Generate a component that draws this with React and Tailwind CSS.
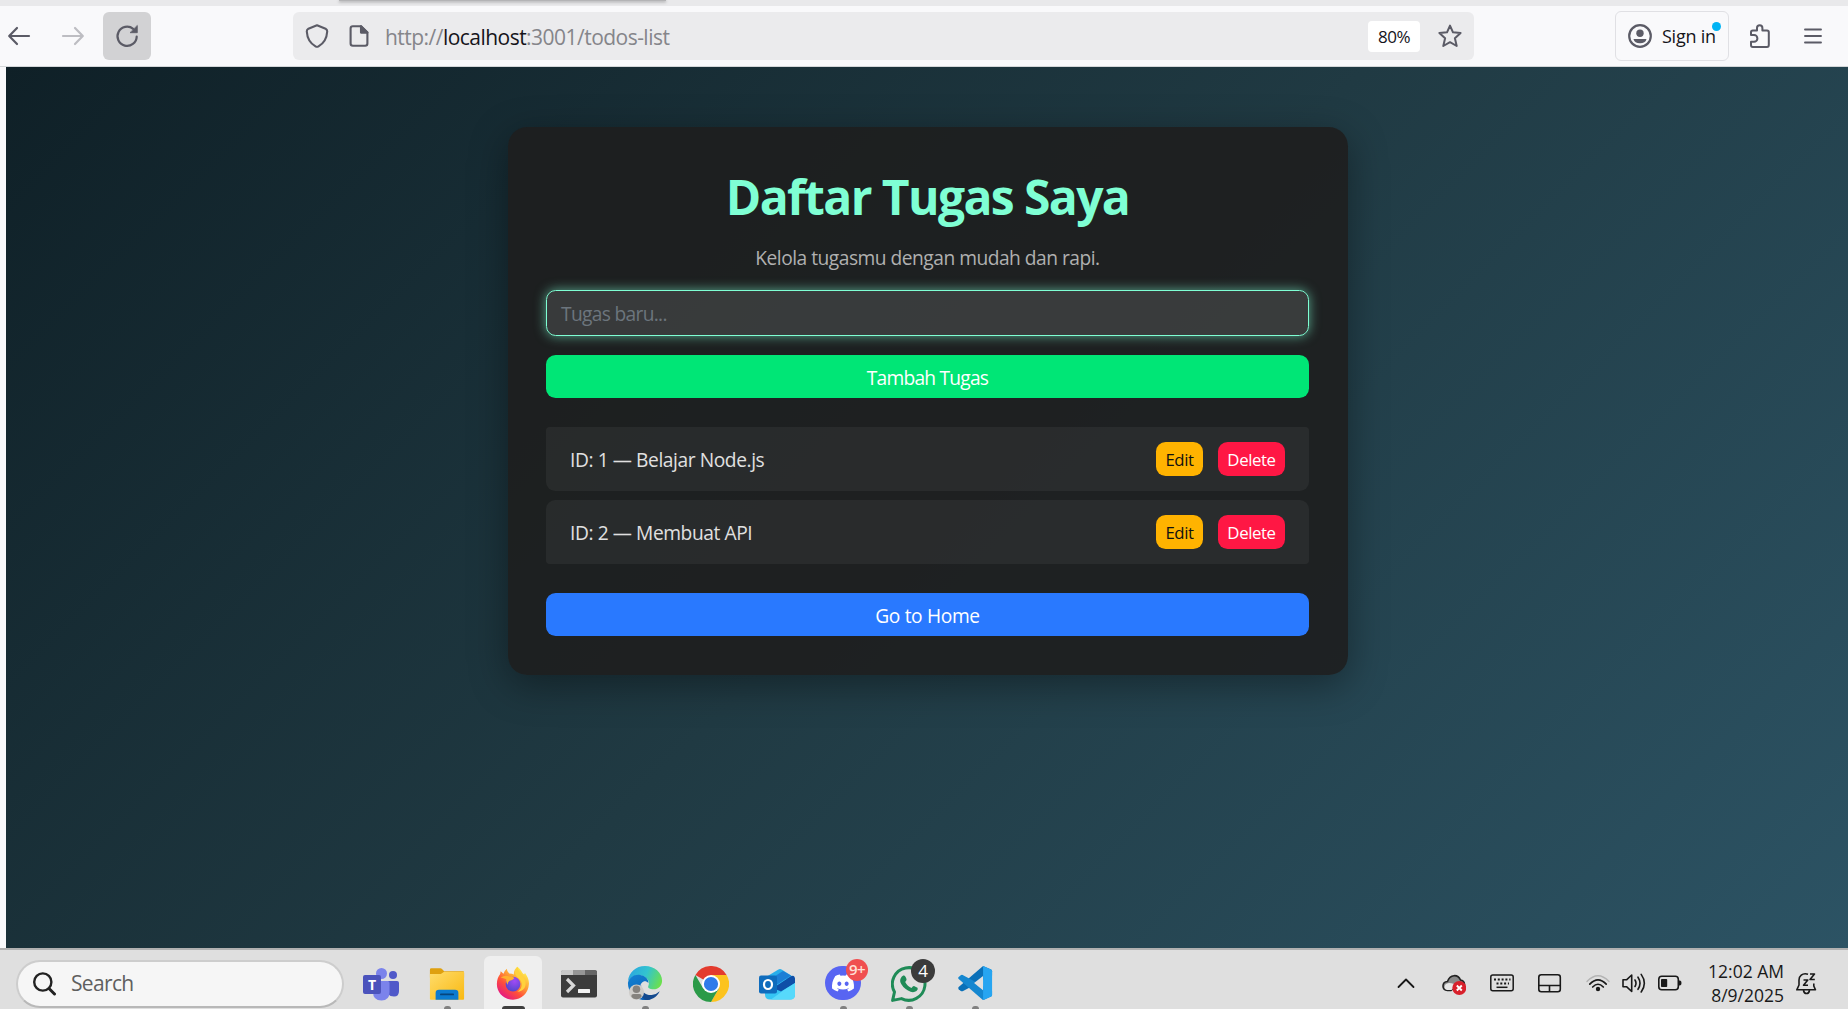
import { FaDiscord } from "react-icons/fa";

function BackArrow({ flip, className }) {
  return (
    <svg viewBox="0 0 24 24" className={className} fill="none" stroke="currentColor" strokeWidth="2.2" strokeLinecap="round" strokeLinejoin="round">
      <g transform={flip ? "matrix(-1 0 0 1 24 0)" : undefined}>
        <path d="M22 12H2.5M10 4L2.2 12L10 20" />
      </g>
    </svg>
  );
}

function NavBar() {
  return (
    <div className="flex h-[61px] shrink-0 items-center border-b border-[#d3d6d8] bg-[#f9f9fb] text-[#5b5b66]">
      <BackArrow className="ml-[7px] h-6 w-6" />
      <BackArrow flip className="ml-[30px] h-6 w-6 text-[#bdbdc2]" />
      <div className="ml-[18px] flex h-12 w-12 items-center justify-center rounded-md bg-[#d2d2d4]">
        <svg viewBox="0 0 24 24" className="h-6 w-6" fill="none" stroke="currentColor" strokeWidth="2.2" strokeLinecap="round">
          <path d="M18.2 4.9A9.6 9.6 0 1 0 21.7 12.6" />
          <path d="M22.3 1.8V8.7H15.4Z" fill="currentColor" strokeWidth="0.8" strokeLinejoin="round" />
        </svg>
      </div>
      <div className="ml-[142px] flex h-12 w-[1181px] items-center rounded-md bg-[#ebebed]">
        <svg viewBox="0 0 24 24" className="ml-3 h-6 w-6" fill="none" stroke="currentColor" strokeWidth="2.1" strokeLinejoin="round">
          <path d="M12 1.2L20.6 4.8Q22.3 5.6 22.2 7.5C21.8 14.5 18.5 19.5 13.5 22.4Q12 23.2 10.5 22.4C5.5 19.5 2.2 14.5 1.8 7.5Q1.7 5.6 3.4 4.8Z" />
        </svg>
        <svg viewBox="0 0 24 24" className="ml-[18px] h-6 w-6" fill="none" stroke="currentColor" strokeWidth="2.1" strokeLinejoin="round">
          <path d="M14 2.2H5.8Q3.6 2.2 3.6 4.4V19.6Q3.6 21.8 5.8 21.8H18.2Q20.4 21.8 20.4 19.6V8.6Z" />
          <path d="M14 2.2V8.6H20.4Z" fill="currentColor" />
        </svg>
        <div className="ml-[14px] mt-[2px] whitespace-nowrap text-[21px] leading-8 tracking-[-0.53px] text-[#85858a]">
          http://<span className="text-[#15141a]">localhost</span>:3001/todos-list
        </div>
        <div className="ml-auto flex h-[31px] w-[52px] items-center justify-center rounded bg-white pt-px text-[17px] tracking-[-0.5px] text-[#15141a]">
          80%
        </div>
        <svg viewBox="0 0 24 24" className="ml-[18px] mr-3 h-6 w-6" fill="none" stroke="currentColor" strokeWidth="2" strokeLinejoin="round">
          <path d="M12 1.6L15 8.3L22.6 9L16.9 14.3L18.7 22L12 18.2L5.3 22L7.1 14.3L1.4 9L9 8.3Z" />
        </svg>
      </div>
      <div className="relative ml-[141px] flex h-[50px] w-[114px] items-center rounded-md border border-[#e0e0e4] pl-3">
        <svg viewBox="0 0 24 24" className="h-6 w-6" fill="none" stroke="currentColor" strokeWidth="2.2">
          <circle cx="12" cy="12" r="10.8" />
          <circle cx="12" cy="9.3" r="3.7" fill="currentColor" stroke="none" />
          <path d="M5.5 15H18.5Q17.5 19.3 12 19.3T5.500 15Z" fill="currentColor" stroke="none" />
        </svg>
        <span className="ml-[10px] whitespace-nowrap text-[18px] tracking-[-0.25px] text-[#15141a]">Sign in</span>
        <span className="absolute left-[96px] top-[10px] h-[9px] w-[9px] rounded-full bg-[#00b3f4]" />
      </div>
      <svg viewBox="0 0 24 24" className="ml-[19px] h-6 w-6" fill="none" stroke="currentColor" strokeWidth="2" strokeLinejoin="round">
        <path d="M3 11V8.2Q3 6.4 4.8 6.4H9V3.9A2.7 2.7 0 0 1 14.4 3.9V6.4H19Q20.8 6.4 20.8 8.2V21Q20.8 23 19 23H4.8Q3 23 3 21V17.800H6A3.4 3.4 0 0 0 6 11Z" />
      </svg>
      <svg viewBox="0 0 18 16" className="ml-[32px] h-4 w-[18px]" stroke="currentColor" strokeWidth="1.9" strokeLinecap="round">
        <path d="M1 1.5H17M1 8H17M1 14.5H17" />
      </svg>
    </div>
  );
}

function TodoItem({ text, shape }) {
  return (
    <li className={`flex h-16 items-center bg-white/5 pl-6 pr-6 ${shape}`}>
      <span className="whitespace-nowrap pt-[2px] text-[19.2px] tracking-[-0.42px] text-[#e0e0e0]">{text}</span>
      <button className="ml-auto flex h-[34px] w-[47px] items-center justify-center rounded-[9.6px] bg-[#ffb300] pt-[2px] text-[16.8px] tracking-[-0.4px] text-[#111]">
        Edit
      </button>
      <button className="ml-[15px] flex h-[34px] w-[67px] items-center justify-center rounded-[9.6px] bg-[#ff1744] pt-[2px] text-[16.8px] tracking-[-0.4px] text-white">
        Delete
      </button>
    </li>
  );
}

function TodoCard() {
  return (
    <main className="flex h-[548px] w-[840px] flex-col rounded-[19.2px] bg-[rgba(30,30,30,0.9)] pl-[38px] pr-[39px] pt-[39px] text-[19.2px] shadow-[0_10px_38px_rgba(0,0,0,0.37)]">
      <h1 className="flex h-[58px] items-center justify-center whitespace-nowrap pt-[3px] text-[48px] font-bold tracking-[-1.6px] text-[#7fffd4]">
        Daftar Tugas Saya
      </h1>
      <p className="mt-[19px] flex h-[29px] items-center justify-center whitespace-nowrap pt-[2px] tracking-[-0.5px] text-[#b0b0b0]">
        Kelola tugasmu dengan mudah dan rapi.
      </p>
      <div className="mt-[18px] flex h-[46px] items-center rounded-[9.6px] border border-[#7fffd4] bg-white/12 pl-[14px] pt-[2px] tracking-[-0.68px] text-[#6c757d] shadow-[0_0_12px_rgba(127,255,212,0.6)]">
        Tugas baru...
      </div>
      <button className="mt-[19px] flex h-[43px] items-center justify-center rounded-[9.6px] bg-[#00e676] pt-[4px] tracking-[-0.78px] text-white">
        Tambah Tugas
      </button>
      <ul className="mt-[29px] flex flex-col gap-[9px]">
        <TodoItem text="ID: 1 — Belajar Node.js" shape="rounded-t-[4px] rounded-b-[9.6px]" />
        <TodoItem text="ID: 2 — Membuat API" shape="rounded-t-[9.6px] rounded-b-[4px]" />
      </ul>
      <button className="mt-[29px] flex h-[43px] items-center justify-center rounded-[9.6px] bg-[#2979ff] pt-[4px] tracking-[-0.35px] text-white">
        Go to Home
      </button>
    </main>
  );
}

function Teams() {
  return (
    <svg viewBox="0 0 36 36" className="h-9 w-9">
      <circle cx="30" cy="9" r="4" fill="#5059c9" />
      <path d="M25 15H34Q36 15 36 17V25Q36 30.5 31 30.5Q27 30.5 25 28Z" fill="#5059c9" />
      <circle cx="18.5" cy="7.5" r="5.5" fill="#7b83eb" />
      <path d="M10 15H24.5Q26.5 15 26.5 17V26Q26.5 34.500 18.5 34.500Q10 34.500 10 26Z" fill="#7b83eb" />
      <rect x="0" y="9" width="18" height="19" rx="2" fill="#4b53bc" />
      <text x="9" y="23.5" textAnchor="middle" fontSize="14" fontWeight="700" fill="#fff">T</text>
    </svg>
  );
}

function Folder() {
  return (
    <svg viewBox="0 0 36 36" className="h-9 w-9">
      <defs>
        <linearGradient id="folder" x1="0" y1="0" x2="1" y2="1"><stop offset="0" stopColor="#ffdc6b" /><stop offset="1" stopColor="#f9b912" /></linearGradient>
      </defs>
      <path d="M0 4Q0 2.5 1.5 2.5H11Q12 2.5 13 3.5L15 5.5H35Q36 5.5 36 7V12H0Z" fill="#dfa00f" />
      <path d="M0 8.5H11.5L15 6H36V34.5Q36 35.5 35 35.5H1Q0 35.5 0 34.5Z" fill="url(#folder)" />
      <path d="M6 35.5V28.5Q6 25 9.5 25H26.500Q30 25 30 28.500V35.5Z" fill="#0b7bd0" />
      <path d="M11.5 30H24.5" stroke="#06457c" strokeWidth="1.8" strokeLinecap="round" />
    </svg>
  );
}

function Firefox() {
  return (
    <svg viewBox="0 0 36 36" className="h-9 w-9">
      <defs>
        <linearGradient id="fox" x1="0.85" y1="0.1" x2="0.2" y2="0.95">
          <stop offset="0" stopColor="#fff44f" /><stop offset="0.35" stopColor="#ffa436" /><stop offset="0.65" stopColor="#ff4f3a" /><stop offset="1" stopColor="#e31587" />
        </linearGradient>
        <radialGradient id="globe" cx="0.6" cy="0.3" r="0.8"><stop offset="0" stopColor="#a24bf5" /><stop offset="1" stopColor="#4a45c8" /></radialGradient>
      </defs>
      <path d="M22.5 0.8C26.5 3.5 27 6.5 29 8.5C30 9 30.5 8 30.5 7C33.5 11 35 15 34.8 19C34.3 28.5 27 35.5 18 35.5C8.5 35.5 1 28.5 1 19C1 14.5 2.5 11 4.5 8.5L5 5.5L8 8.2Q9 5 11.5 3Q11.5 6 14 8Q17 8 19 9C18.500 5.5 20 3 22.5 0.8Z" fill="url(#fox)" />
      <circle cx="18" cy="19" r="7.8" fill="url(#globe)" />
      <path d="M5 12Q10 9 15 11.5Q18 11 19.5 12.8Q17 15 14.5 15.5Q12 17 12.5 20C11 18 10.5 15.5 11 14Q8 12.5 5 12Z" fill="#ffb02e" />
      <path d="M22.5 0.8C17 8 22 11 25.5 14.5C29 19 27 25 22.5 27C29 27 32.5 22 31 15.5C30 11 24.5 8.5 22.5 0.8Z" fill="#ffd23c" />
    </svg>
  );
}

function Terminal() {
  return (
    <svg viewBox="0 0 36 36" className="h-9 w-9">
      <rect y="4.5" width="36" height="27" rx="2" fill="#3c3c3c" />
      <path d="M0 9V6Q0 4 2 4H12V9Z" fill="#c9c9c9" />
      <path d="M12 4H24V9H12Z" fill="#969696" />
      <path d="M24 4H34Q36 4 36 6V9H24Z" fill="#666" />
      <path d="M6 13L12.5 19.5L6 26" fill="none" stroke="#d8d8d8" strokeWidth="3.2" />
      <rect x="17" y="23" width="12" height="4" rx="0.5" fill="#f2f2f2" />
    </svg>
  );
}

function Edge() {
  return (
    <svg viewBox="0 0 36 36" className="h-9 w-9">
      <defs>
        <linearGradient id="edgeTop" x1="0" y1="0.3" x2="1" y2="0.6"><stop offset="0" stopColor="#2aa6e0" /><stop offset="0.5" stopColor="#33c4cf" /><stop offset="1" stopColor="#6be04d" /></linearGradient>
        <linearGradient id="edgeLeft" x1="0" y1="0" x2="0.5" y2="1"><stop offset="0" stopColor="#1383d4" /><stop offset="1" stopColor="#0c62b8" /></linearGradient>
      </defs>
      <path d="M0 16C1 6.5 8.5 0 18 0C28 0 36 7 36 15.5C36 21 32 24.5 27 24.5C23 24.5 20.5 23 21.5 21C23 18 22 13.5 17 11C11 8 3 10.5 0 16Z" fill="url(#edgeTop)" />
      <path d="M0 18C1 12 7 8.5 13 9.5C19 10.5 22 14.5 21.5 18C18 13.5 12.5 17.5 13 23C13.5 29 18 34 24 35Q21 36 18 36C8 36 0 28 0 18Z" fill="url(#edgeLeft)" />
      <path d="M14 20C13 27 19 31 25 30.5Q30 30 33.500 26.500C31 32 26 35.5 19 36C13 33 11 25 14 20Z" fill="#144a8f" />
      <circle cx="9" cy="27.5" r="8" fill="#cfcdca" />
      <circle cx="9" cy="24.5" r="4" fill="#85827e" />
      <path d="M3.5 32Q3.5 29.5 6 29.5H12Q14.5 29.5 14.5 32Q13 35 9 35T3.5 32Z" fill="#85827e" />
    </svg>
  );
}

function Chrome() {
  return (
    <svg viewBox="0 0 36 36" className="h-9 w-9">
      <path d="M18 18L2.4 9A18 18 0 0 1 33.6 9Z" fill="#e33b2e" />
      <path d="M18 9H33.6A18 18 0 0 1 18 36L25.8 22.5Z" fill="#fcc31e" />
      <path d="M10.2 22.5L2.4 9A18 18 0 0 0 18 36L25.8 22.5Z" fill="#2b9a48" />
      <circle cx="18" cy="18" r="9" fill="#fff" />
      <circle cx="18" cy="18" r="7.1" fill="#2f7bea" />
    </svg>
  );
}

function Outlook() {
  return (
    <svg viewBox="0 0 36 36" className="h-9 w-9">
      <path d="M7 11L19 3.7Q21 2.5 23 3.7L36 12V20H7Z" fill="#28aeea" />
      <path d="M6 13H36V28.5Q36 33.5 31 33.5H11Q6 33.5 6 28.5Z" fill="#35c5f4" />
      <path d="M14 22L31.5 10.5Q35.5 8 36 13V17L22 25.5Z" fill="#0f4fa8" />
      <path d="M10 14L24 5L32 9.5L16 20Z" fill="#1c7fd6" />
      <path d="M36 17V28.5Q36 33.5 31 33.5H12L25 24Z" fill="#57d9fb" />
      <rect y="9.5" width="18" height="18" rx="2" fill="#0f6cbd" />
      <ellipse cx="9" cy="18.5" rx="4" ry="4.5" fill="none" stroke="#fff" strokeWidth="2.2" />
    </svg>
  );
}

function Discord() {
  return (
    <div className="relative flex h-9 w-9 items-center justify-center rounded-full bg-[#5865f2]">
      <FaDiscord className="h-6 w-6 text-white" />
      <span className="absolute -top-[7px] left-[21px] flex h-[22px] w-[22px] items-center justify-center rounded-full bg-[#f04f50] pb-px text-[15px] font-semibold tracking-[-0.5px] text-[#ffe0d8]">9+</span>
    </div>
  );
}

function WhatsApp() {
  return (
    <div className="relative flex h-9 w-9 items-center justify-center">
      <svg viewBox="0 0 36 36" className="absolute inset-0 h-9 w-9" fill="none">
        <path d="M1.6 34.4L3.5 26A16.3 16.3 0 1 1 10.5 32.6Z" stroke="#1f8b57" strokeWidth="3" strokeLinejoin="round" />
        <path d="M12.2 9.5C14 9 14.5 10.5 15.5 13Q16 14.2 14.2 16Q16.5 20.5 20.5 22Q22 19.8 23 20L26.5 21.8Q27.5 23 25.5 25Q22 27.5 17 24.5Q11 21 9.3 16Q8.5 12 12.2 9.5Z" fill="#1f8b57" />
      </svg>
      <span className="absolute -top-[7px] left-5 flex h-6 w-6 items-center justify-center rounded-full bg-[#3b3b3b] text-[17px] text-white">4</span>
    </div>
  );
}

function VSCode() {
  return (
    <svg viewBox="0 0 36 36" className="h-9 w-9">
      <path d="M26.5 0L35 3.8Q36 4.3 36 5.5V10L5 26.5Q4 27 3 26.3L0.8 24.4Q-0.3 23.3 0.8 22.2Z" fill="#0a70b8" />
      <path d="M26.5 36L35 32.2Q36 31.7 36 30.5V26L5 9.5Q4 9 3 9.7L0.8 11.6Q-0.3 12.7 0.8 13.8Z" fill="#1587d0" />
      <path d="M26.5 10.5L17 18L26.5 25.5Z" fill="#e0e0e0" />
      <path d="M26.5 0L35 3.8Q36 4.3 36 5.5V30.5Q36 31.7 35 32.2L26.5 36Z" fill="#27a5f1" />
    </svg>
  );
}

function TaskIcon({ children, mark }) {
  return (
    <div className="flex h-[59px] w-[66px] flex-col items-center pt-4">
      {children}
      {mark && <span className="mt-[6px] h-[3px] w-[7px] rounded-t bg-[#808080]" />}
    </div>
  );
}

function Tray() {
  return (
    <div className="ml-auto flex items-center pr-[29px] pt-[7px] text-[#191919]">
      <svg viewBox="0 0 24 24" className="h-6 w-6" fill="none" stroke="currentColor" strokeWidth="1.8" strokeLinecap="round" strokeLinejoin="round">
        <path d="M4.5 16L12 8.5L19.5 16" />
      </svg>
      <svg viewBox="0 0 24 24" className="ml-6 h-6 w-6" fill="none">
        <path d="M5.5 19.5C-0.5 19 -0.5 11 5.5 10.5C8 3 16 3 18.5 9Q22 9.5 22.5 13L16 13L9 19.5Z" fill="#8a8a8a" stroke="#222" strokeWidth="1.6" />
        <path d="M2.5 17Q2 12.5 7 12Q12 12 14.5 14.5L9.5 19H5Q3 18.5 2.5 17Z" fill="#e6e6e6" />
        <circle cx="17.3" cy="17" r="7" fill="#d8202b" />
        <path d="M14.8 14.5L19.8 19.5M19.8 14.5L14.8 19.5" stroke="#fff" strokeWidth="1.9" />
      </svg>
      <svg viewBox="0 0 24 24" className="ml-6 h-6 w-6" fill="none" stroke="currentColor" strokeWidth="1.5">
        <rect x="0.8" y="4" width="22.4" height="15.8" rx="2" />
        <path d="M4 8.5H20.5M6.5 12.5H19" strokeWidth="2" strokeDasharray="2 1.8" />
        <path d="M6.5 16.3H17.5" />
      </svg>
      <svg viewBox="0 0 24 24" className="ml-6 h-6 w-6" fill="none" stroke="currentColor" strokeWidth="1.6">
        <rect x="0.8" y="3.8" width="21.5" height="17" rx="2.5" />
        <path d="M1 14.5H22.5M11.5 14.5V20.5" />
      </svg>
      <svg viewBox="0 0 24 24" className="ml-6 h-6 w-6" fill="none" stroke="currentColor" strokeWidth="1.7" strokeLinecap="round">
        <path d="M1 10.5Q12 -1 23 10.5" stroke="#b4b4b4" strokeWidth="1.4" />
        <path d="M3.8 13.2Q12 4.5 20.2 13.2M6.7 16Q12 10.5 17.3 16" />
        <circle cx="12" cy="18" r="2.2" fill="currentColor" stroke="none" />
      </svg>
      <svg viewBox="0 0 24 24" className="ml-3 h-6 w-6" fill="none" stroke="currentColor" strokeWidth="1.6" strokeLinecap="round" strokeLinejoin="round">
        <path d="M1 8.8H4.5L9.7 4V20.5L4.5 15.7H1Z" />
        <path d="M13 9Q15 12.2 13 15.5M16 6.2Q20 12.2 16 18.3M19.2 3.4Q25.5 12.2 19.2 21" />
      </svg>
      <svg viewBox="0 0 24 24" className="ml-3 h-6 w-6" fill="none" stroke="currentColor" strokeWidth="1.6">
        <rect x="0.8" y="5.2" width="19.5" height="13.6" rx="3" />
        <rect x="3" y="8" width="6.2" height="8" rx="0.8" fill="currentColor" stroke="none" />
        <path d="M20.5 9.5H22Q23.5 9.8 23.5 12T22 14.5H20.5Z" fill="currentColor" stroke="none" />
      </svg>
      <div className="ml-[25px] flex w-[77px] flex-col items-end whitespace-nowrap text-[17.5px] leading-6">
        <span>12:02 AM</span>
        <span>8/9/2025</span>
      </div>
      <svg viewBox="0 0 24 24" className="ml-[11px] h-6 w-6" fill="none" stroke="currentColor" strokeWidth="1.6" strokeLinejoin="round">
        <path d="M13 3.2C7 1.5 4 5.5 4 9V14L1.8 18.8H20.5L18.8 15V12.5M8.5 19.5Q9 22.5 11.5 22.5T14.5 19.5" />
        <path d="M8.5 9H12.8L8.5 14.2H13M15 3H19.5L15 8.5H19.8" />
      </svg>
    </div>
  );
}

function Taskbar() {
  return (
    <footer className="flex h-[61px] shrink-0 border-t-2 border-[#b1b1b1] bg-[#dfdfdf]">
      <div className="ml-4 mt-[10px] flex h-[48px] w-[328px] items-center rounded-full border-2 border-[#cdcdcd] border-b-[#b8b8b8] bg-[#f6f6f6] pl-[15px]">
        <svg viewBox="0 0 24 24" className="h-6 w-6" fill="none" stroke="#222" strokeWidth="2.4" strokeLinecap="round">
          <circle cx="9.8" cy="10" r="8.6" />
          <path d="M16.5 17L21.5 22" strokeWidth="3" />
        </svg>
        <span className="ml-[14px] text-[21px] tracking-[-0.65px] text-[#5f5f5f]">Search</span>
      </div>
      <div className="ml-1 flex">
        <TaskIcon><Teams /></TaskIcon>
        <TaskIcon mark><Folder /></TaskIcon>
        <div className="mx-[4px] mt-[6px] flex h-[53px] w-[58px] flex-col items-center rounded-t-md bg-[#efefef] pt-[10px]">
          <Firefox />
          <span className="mt-[6px] h-[3px] w-[23px] rounded-t bg-[#3e3e3e]" />
        </div>
        <TaskIcon><Terminal /></TaskIcon>
        <TaskIcon mark><Edge /></TaskIcon>
        <TaskIcon><Chrome /></TaskIcon>
        <TaskIcon><Outlook /></TaskIcon>
        <TaskIcon mark><Discord /></TaskIcon>
        <TaskIcon mark><WhatsApp /></TaskIcon>
        <TaskIcon mark><VSCode /></TaskIcon>
      </div>
      <Tray />
    </footer>
  );
}

export default function App() {
  return (
    <div className="flex h-[1009px] w-[1848px] flex-col overflow-hidden font-['Open_Sans','Noto_Sans',sans-serif]">
      <div className="h-[6px] shrink-0 overflow-hidden bg-[#e9e9eb]">
        <div className="ml-[339px] h-px w-[327px] bg-[#b4b4b6] shadow-[0_1px_3px_rgba(0,0,0,0.5)]" />
      </div>
      <NavBar />
      <div className="flex min-h-0 flex-1 bg-[#f9f9fb] pl-[6px]">
        <div className="flex flex-1 items-start bg-[linear-gradient(135deg,#0f2027,#203a43,#2c5364)] pl-[502px] pt-[60px]">
          <TodoCard />
        </div>
      </div>
      <Taskbar />
    </div>
  );
}
